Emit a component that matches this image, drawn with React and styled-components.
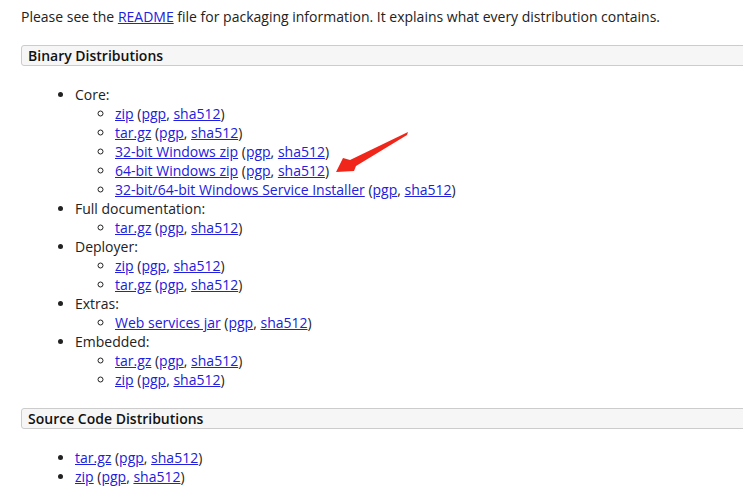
import React from "react";
import styled, { createGlobalStyle } from "styled-components";

const Global = createGlobalStyle`
  html, body { margin: 0; padding: 0; background: #fff; }
  body {
    font-family: "Open Sans", "Noto Sans", sans-serif;
    font-size: 14px;
    line-height: 19px;
    color: #222;
    overflow: hidden;
  }
`;

const Page = styled.div`
  padding: 7px 0 0 21px;
  width: 743px;
  box-sizing: border-box;
  position: relative;
`;

const Intro = styled.p`
  margin: 0 0 19px 0;
`;

const SectionHeader = styled.h3`
  margin: 0 -10px 0 0;
  font-size: 14px;
  font-weight: 600;
  line-height: 19px;
  padding: 0 6px;
  background: #f6f6f6;
  border: 1px solid #cccccc;
  border-radius: 3px;
  color: #111;
`;

const Body = styled.div`
  padding: 19px 0 19px 0;
`;

const List = styled.ul`
  margin: 0;
  padding-left: ${(p) => (p.$nested ? "40px" : "54px")};
  list-style-type: ${(p) => (p.$nested ? "circle" : "disc")};
`;

const Item = styled.li`
  line-height: 19px;
`;

const Link = styled.a`
  color: #2020dd;
  text-decoration: underline;
`;

const Arrow = styled.svg`
  position: absolute;
  left: 330px;
  top: 126px;
`;

const Files = ({ name }) => (
  <>
    <Link href="#">{name}</Link> (<Link href="#">pgp</Link>,{" "}
    <Link href="#">sha512</Link>)
  </>
);

const groups = [
  {
    label: "Core:",
    files: [
      "zip",
      "tar.gz",
      "32-bit Windows zip",
      "64-bit Windows zip",
      "32-bit/64-bit Windows Service Installer",
    ],
  },
  { label: "Full documentation:", files: ["tar.gz"] },
  { label: "Deployer:", files: ["zip", "tar.gz"] },
  { label: "Extras:", files: ["Web services jar"] },
  { label: "Embedded:", files: ["tar.gz", "zip"] },
];

export default function App() {
  return (
    <Page>
      <Global />
      <Intro>
        Please see the <Link href="#">README</Link> file for packaging
        information. It explains what every distribution contains.
      </Intro>
      <SectionHeader>Binary Distributions</SectionHeader>
      <Body>
        <List>
          {groups.map((g) => (
            <Item key={g.label}>
              {g.label}
              <List $nested>
                {g.files.map((f, i) => (
                  <Item key={i}>
                    <Files name={f} />
                  </Item>
                ))}
              </List>
            </Item>
          ))}
        </List>
      </Body>
      <SectionHeader>Source Code Distributions</SectionHeader>
      <Body>
        <List>
          <Item>
            <Files name="tar.gz" />
          </Item>
          <Item>
            <Files name="zip" />
          </Item>
        </List>
      </Body>
      <Arrow width="84" height="52" viewBox="0 0 84 52">
        <path
          d="M78 6 L20 34 L13 32 L6 46 L24 45 L26 40 L77 9 Z"
          fill="#f0261b"
        />
      </Arrow>
    </Page>
  );
}
